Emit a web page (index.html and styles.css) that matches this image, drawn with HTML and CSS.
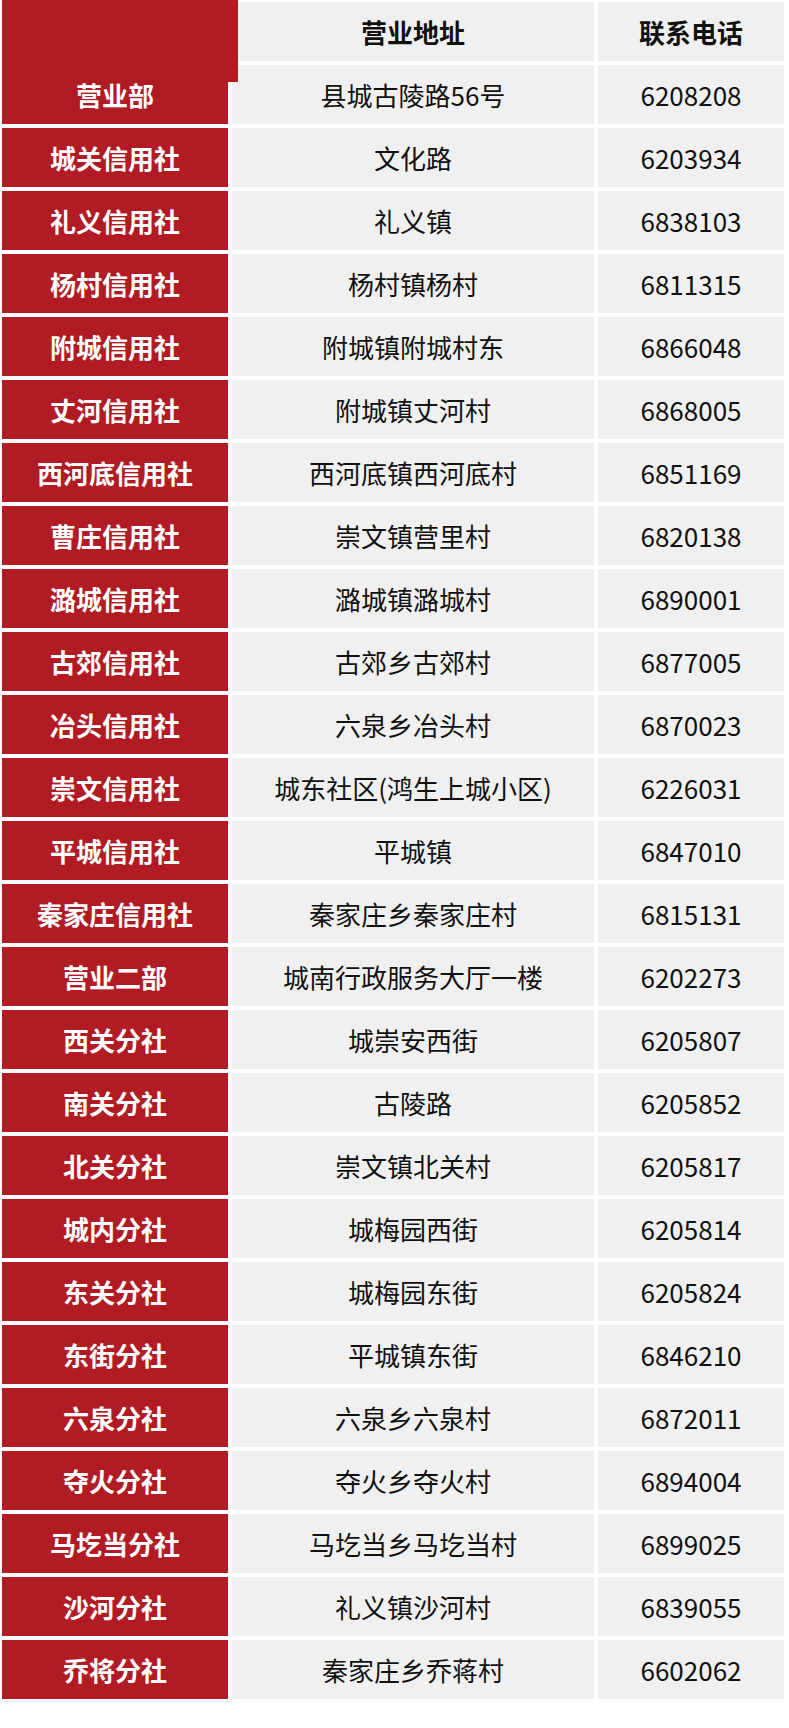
FILE: index.html
```html
<!DOCTYPE html>
<html lang="zh-CN">
<head>
<meta charset="utf-8">
<title>营业网点</title>
<link rel="stylesheet" href="styles.css">
</head>
<body>
<div class="wrap">
  <div class="corner"></div>
  <div class="table">
    <div class="cell name head"></div>
    <div class="cell head">营业地址</div>
    <div class="cell head">联系电话</div>

    <div class="cell name">营业部</div><div class="cell">县城古陵路56号</div><div class="cell">6208208</div>
    <div class="cell name">城关信用社</div><div class="cell">文化路</div><div class="cell">6203934</div>
    <div class="cell name">礼义信用社</div><div class="cell">礼义镇</div><div class="cell">6838103</div>
    <div class="cell name">杨村信用社</div><div class="cell">杨村镇杨村</div><div class="cell">6811315</div>
    <div class="cell name">附城信用社</div><div class="cell">附城镇附城村东</div><div class="cell">6866048</div>
    <div class="cell name">丈河信用社</div><div class="cell">附城镇丈河村</div><div class="cell">6868005</div>
    <div class="cell name">西河底信用社</div><div class="cell">西河底镇西河底村</div><div class="cell">6851169</div>
    <div class="cell name">曹庄信用社</div><div class="cell">崇文镇营里村</div><div class="cell">6820138</div>
    <div class="cell name">潞城信用社</div><div class="cell">潞城镇潞城村</div><div class="cell">6890001</div>
    <div class="cell name">古郊信用社</div><div class="cell">古郊乡古郊村</div><div class="cell">6877005</div>
    <div class="cell name">冶头信用社</div><div class="cell">六泉乡冶头村</div><div class="cell">6870023</div>
    <div class="cell name">崇文信用社</div><div class="cell">城东社区(鸿生上城小区)</div><div class="cell">6226031</div>
    <div class="cell name">平城信用社</div><div class="cell">平城镇</div><div class="cell">6847010</div>
    <div class="cell name">秦家庄信用社</div><div class="cell">秦家庄乡秦家庄村</div><div class="cell">6815131</div>
    <div class="cell name">营业二部</div><div class="cell">城南行政服务大厅一楼</div><div class="cell">6202273</div>
    <div class="cell name">西关分社</div><div class="cell">城崇安西街</div><div class="cell">6205807</div>
    <div class="cell name">南关分社</div><div class="cell">古陵路</div><div class="cell">6205852</div>
    <div class="cell name">北关分社</div><div class="cell">崇文镇北关村</div><div class="cell">6205817</div>
    <div class="cell name">城内分社</div><div class="cell">城梅园西街</div><div class="cell">6205814</div>
    <div class="cell name">东关分社</div><div class="cell">城梅园东街</div><div class="cell">6205824</div>
    <div class="cell name">东街分社</div><div class="cell">平城镇东街</div><div class="cell">6846210</div>
    <div class="cell name">六泉分社</div><div class="cell">六泉乡六泉村</div><div class="cell">6872011</div>
    <div class="cell name">夺火分社</div><div class="cell">夺火乡夺火村</div><div class="cell">6894004</div>
    <div class="cell name">马圪当分社</div><div class="cell">马圪当乡马圪当村</div><div class="cell">6899025</div>
    <div class="cell name">沙河分社</div><div class="cell">礼义镇沙河村</div><div class="cell">6839055</div>
    <div class="cell name">乔将分社</div><div class="cell">秦家庄乡乔蒋村</div><div class="cell">6602062</div>
  </div>
</div>
</body>
</html>
```

FILE: styles.css
```css
html, body {
  margin: 0;
  padding: 0;
  background: #ffffff;
}

.wrap {
  position: relative;
  padding: 2px 0 0 2px;
  font-family: "Noto Sans CJK SC", "Microsoft YaHei", sans-serif;
}

.table {
  display: grid;
  grid-template-columns: 226px 362px 186px;
  grid-auto-rows: 59px;
  column-gap: 4px;
  row-gap: 4px;
  padding-bottom: 2px;
  border-bottom: 1px solid #ececec;
  width: 230px;
  overflow: visible;
}

.cell {
  background: #f0f0f0;
  color: #111111;
  font-size: 26px;
  display: flex;
  align-items: center;
  justify-content: center;
  white-space: nowrap;
  line-height: 1;
  padding-top: 1px;
}

.cell.name {
  background: #b11b23;
  color: #ffffff;
  font-weight: 700;
}

.cell.head {
  font-weight: 700;
  color: #111111;
}

.corner {
  position: absolute;
  left: 2px;
  top: 0;
  width: 236px;
  height: 82px;
  background: #b11b23;
  z-index: 1;
}
```
